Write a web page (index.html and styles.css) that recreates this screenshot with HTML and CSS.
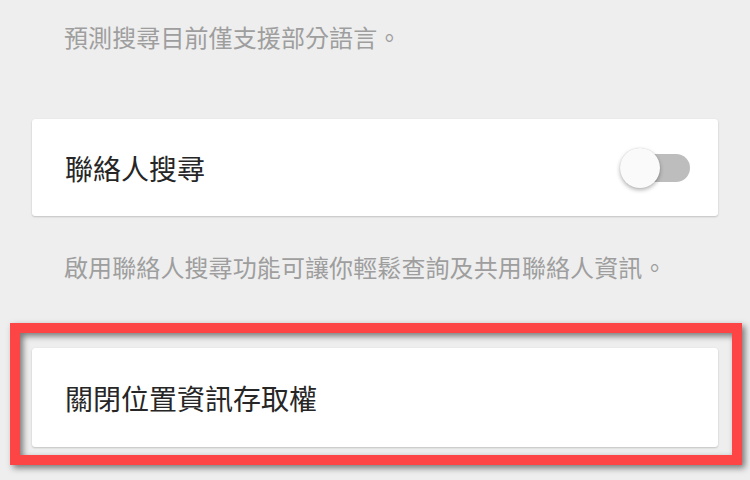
FILE: index.html
```html
<!DOCTYPE html>
<html lang="zh-Hant">
<head>
<meta charset="utf-8">
<link rel="stylesheet" href="styles.css">
</head>
<body>
<div class="page">
  <p class="desc desc-top">預測搜尋目前僅支援部分語言。</p>
  <div class="card">
    <span class="title">聯絡人搜尋</span>
    <div class="switch">
      <div class="track"></div>
      <div class="thumb"></div>
    </div>
  </div>
  <p class="desc desc-mid">啟用聯絡人搜尋功能可讓你輕鬆查詢及共用聯絡人資訊。</p>
  <div class="card card-last">
    <span class="title">關閉位置資訊存取權</span>
  </div>
  <div class="highlight"></div>
</div>
</body>
</html>
```
FILE: styles.css
```css
* { box-sizing: border-box; }
html, body {
  margin: 0;
  padding: 0;
  background: #eeeeee;
  width: 750px;
  height: 480px;
  overflow: hidden;
}
.page {
  position: relative;
  display: flex;
  flex-direction: column;
  padding-top: 19px;
  font-family: "Noto Sans CJK TC", "Noto Sans CJK SC", "Noto Sans", sans-serif;
}
.desc {
  margin: 0;
  padding-left: 64px;
  font-size: 24px;
  line-height: 36px;
  color: #9e9e9e;
  letter-spacing: 0.1px;
}
.desc-top { margin-bottom: 64px; }
.desc-mid { margin: 33px 0 63px; }
.card {
  margin: 0 32px;
  height: 97px;
  background: #ffffff;
  border-radius: 3px;
  box-shadow: 0 1px 2px rgba(0,0,0,0.18), 0 0 1px rgba(0,0,0,0.08);
  display: flex;
  align-items: center;
  justify-content: space-between;
  padding: 0 28px 0 33px;
}
.card-last { height: 99px; }
.title {
  font-size: 28px;
  color: #262626;
  line-height: 40px;
}
.switch {
  position: relative;
  width: 70px;
  height: 40px;
  display: flex;
  align-items: center;
  justify-content: flex-end;
}
.track {
  width: 68px;
  height: 28px;
  border-radius: 14px;
  background: #bdbdbd;
}
.thumb {
  position: absolute;
  left: 0;
  top: 0;
  width: 40px;
  height: 40px;
  border-radius: 50%;
  background: #fafafa;
  box-shadow: 0 2px 4px rgba(0,0,0,0.3), 0 0 1px rgba(0,0,0,0.15);
}
.highlight {
  position: absolute;
  left: 10px;
  top: 323px;
  width: 732px;
  height: 142px;
  border: 10px solid #fe4545;
  filter: drop-shadow(3px 3px 3px rgba(0,0,0,0.5));
}
```
